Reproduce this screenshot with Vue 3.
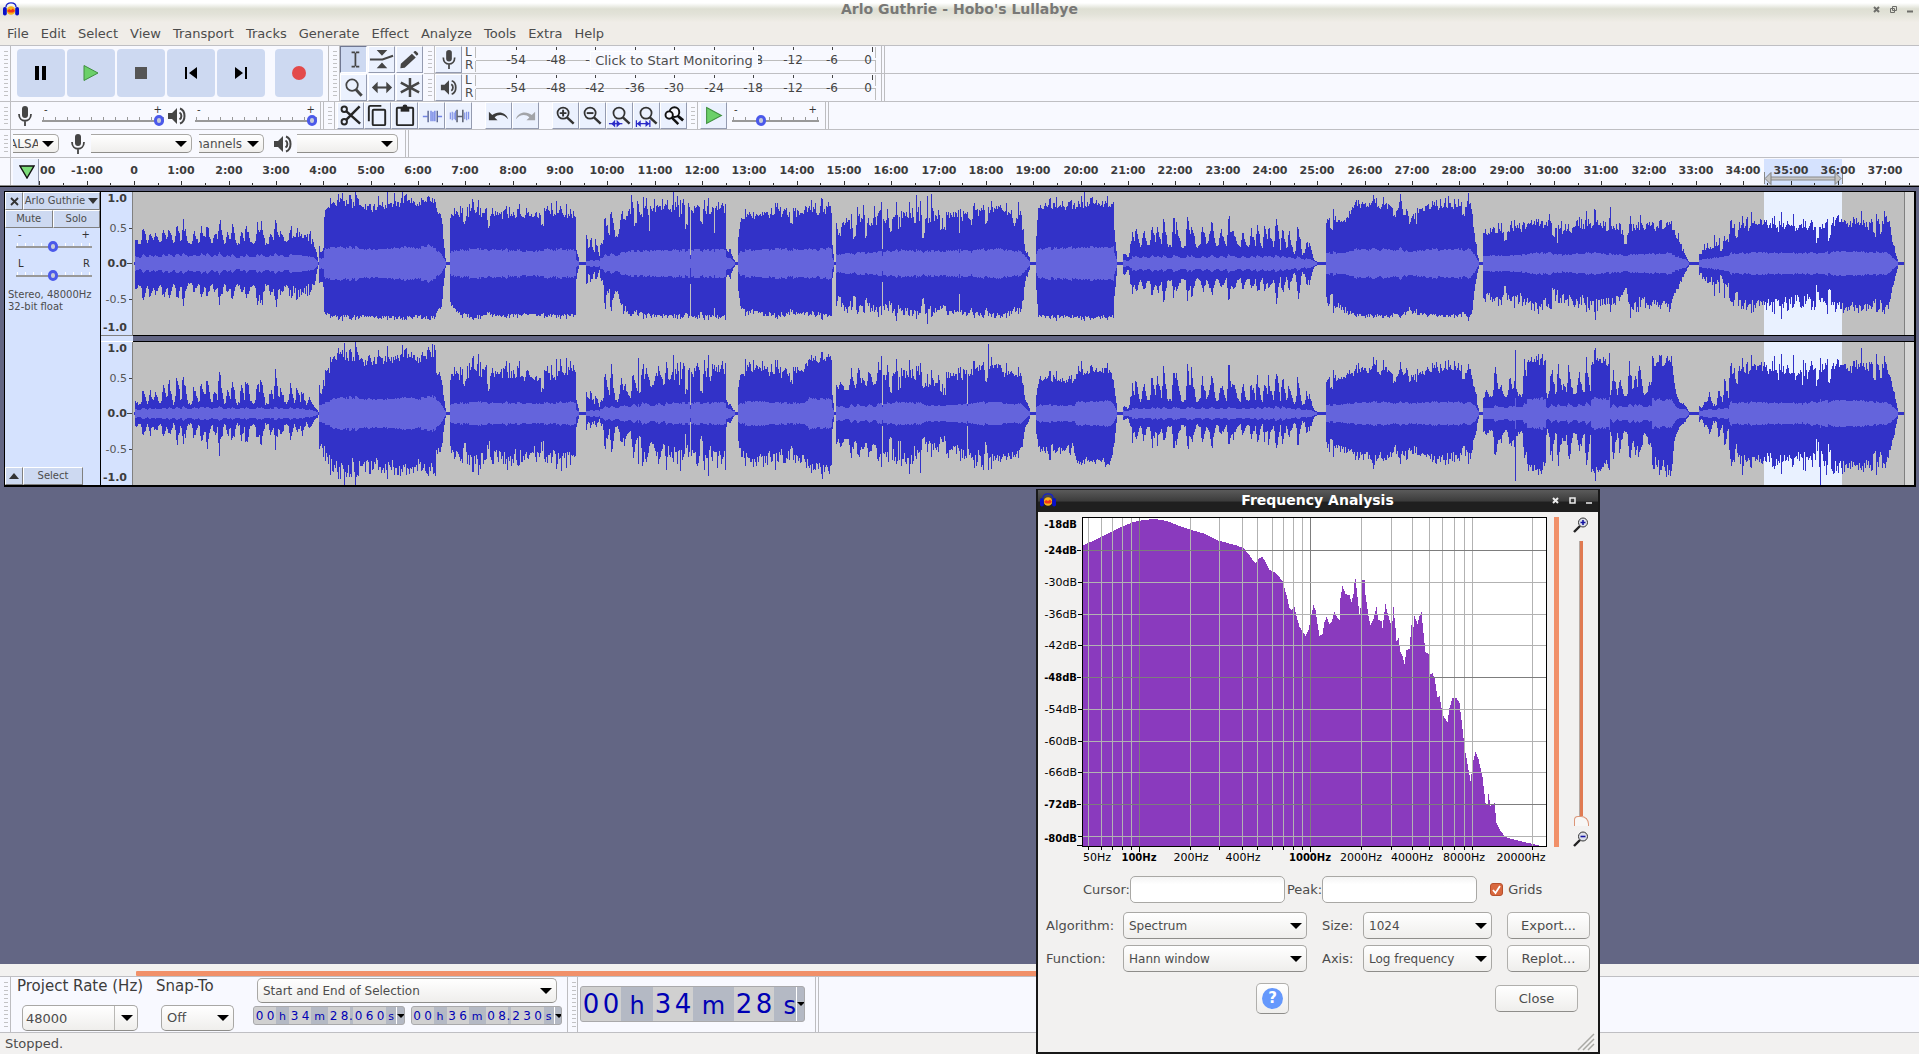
<script setup>
const menus = ['File', 'Edit', 'Select', 'View', 'Transport', 'Tracks', 'Generate', 'Effect', 'Analyze', 'Tools', 'Extra', 'Help']
const transport = ['Pause', 'Play', 'Stop', 'Skip to Start', 'Skip to End', 'Record']
const tools = [
  ['ibeam', 'Selection Tool'], ['envelope', 'Envelope Tool'], ['pencil', 'Draw Tool'],
  ['lens', 'Zoom Tool'], ['shift', 'Time Shift Tool'], ['multi', 'Multi-Tool']
]
const editButtons = [['cut', 'Cut'], ['copy', 'Copy'], ['paste', 'Paste'], ['trim', 'Trim Audio'], ['silence', 'Silence Audio']]
const undoButtons = [['undo', 'Undo'], ['redo', 'Redo']]
const zoomButtons = [['zoomin', 'Zoom In'], ['zoomout', 'Zoom Out'], ['zoomsel', 'Fit Selection'], ['zoomfit', 'Fit Project'], ['zoomtoggle', 'Zoom Toggle']]
const levels = [-54, -48, -42, -36, -30, -24, -18, -12, -6, 0]
const levelX = (i) => 41 + Math.round(i * 39.5)
/* The monitoring prompt covers the middle of the record meter's scale */
const levelText = (l, n) => (n === 1 && l > -42 && l < -18 ? '' : l)

/* Timeline: minutes to pixels, measured from the left edge of the ruler */
const minute = 47.33
const rulerX = (m) => Math.round(95 + m * minute)
const minutes = Array.from({ length: 39 }, (_, i) => i - 1)
const halves = Array.from({ length: 40 }, (_, i) => i - 1.5)

/* Loudness keyframes: x, top low, top high, bottom low, bottom high, rms */
const quiet = (x) => [x, 1, 1, 1, 1, 1]
const left = [
  quiet(0), quiet(2), [2, 17, 38, 20, 38, 7], [32, 20, 40, 20, 42, 8], [67, 18, 48, 18, 42, 9], [107, 18, 40, 20, 40, 7],
  [132, 18, 48, 20, 50, 8], [157, 20, 38, 20, 40, 8], [167, 24, 42, 22, 40, 8], [180, 18, 32, 18, 34, 6], [185, 1, 1, 1, 1, 1],
  quiet(186), [186, 14, 24, 18, 26, 5], [190, 14, 24, 18, 26, 5], [191, 48, 56, 48, 50, 14], [201, 56, 70, 50, 56, 16],
  [225, 55, 70, 51, 56, 15], [245, 46, 66, 51, 55, 13], [270, 54, 70, 51, 56, 15], [295, 58, 70, 51, 57, 17], [303, 57, 62, 49, 54, 14],
  [308, 40, 50, 40, 44, 9], [312, 4, 5, 4, 5, 2], quiet(313), quiet(317), [317, 44, 52, 38, 42, 11], [328, 44, 60, 50, 54, 13],
  [360, 44, 62, 50, 56, 14], [390, 42, 60, 49, 54, 12], [420, 46, 62, 50, 55, 14], [442, 42, 58, 49, 54, 13], [443, 12, 18, 12, 18, 3],
  quiet(446), quiet(453), [453, 4, 28, 4, 22, 2], [466, 4, 30, 4, 20, 3], [467, 16, 52, 12, 48, 6], [485, 26, 60, 28, 52, 10],
  [495, 46, 64, 48, 54, 12], [556, 46, 68, 50, 55, 13], [556, 46, 62, 50, 55, 13], [592, 46, 64, 50, 56, 13], [593, 10, 20, 10, 18, 7],
  [597, 8, 20, 8, 22, 5], quiet(602), quiet(605), [605, 22, 30, 24, 30, 8], [608, 42, 50, 44, 50, 12], [640, 44, 58, 48, 54, 14],
  [680, 46, 60, 46, 54, 13], [698, 48, 66, 50, 56, 15], [699, 10, 16, 10, 14, 4], quiet(701), quiet(703), [703, 32, 48, 36, 50, 9],
  [748, 34, 58, 38, 54, 11], [765, 42, 60, 44, 54, 13], [790, 36, 64, 40, 56, 12], [815, 40, 56, 44, 54, 12], [835, 42, 62, 46, 55, 13],
  [872, 50, 62, 48, 55, 14], [880, 34, 60, 42, 54, 12], [888, 34, 58, 42, 50, 11], [893, 12, 20, 14, 20, 6], quiet(897),
  quiet(903), [903, 24, 28, 24, 28, 8], [905, 52, 60, 50, 54, 14], [940, 52, 66, 51, 56, 15], [960, 54, 70, 52, 57, 16],
  [980, 52, 64, 50, 55, 15], [981, 26, 40, 30, 40, 10], quiet(984), quiet(990), [990, 3, 10, 3, 10, 2], [998, 6, 26, 6, 24, 4],
  [999, 16, 48, 16, 42, 7], [1050, 14, 44, 14, 34, 6], [1090, 16, 46, 14, 36, 7], [1140, 14, 50, 14, 38, 7], [1160, 8, 46, 8, 38, 6],
  [1176, 6, 30, 6, 28, 4], [1181, 3, 8, 3, 8, 2], quiet(1184), quiet(1193), [1193, 38, 48, 32, 44, 10], [1215, 40, 54, 44, 54, 11],
  [1220, 54, 64, 49, 54, 13], [1268, 52, 66, 50, 55, 14], [1271, 40, 56, 44, 52, 11], [1290, 50, 64, 49, 53, 13], [1335, 54, 67, 50, 55, 14],
  [1339, 50, 56, 46, 52, 12], [1342, 14, 22, 14, 22, 6], quiet(1346), quiet(1350), [1350, 26, 38, 28, 40, 7], [1388, 30, 44, 28, 44, 8],
  [1398, 36, 48, 36, 50, 10], [1415, 34, 46, 32, 50, 10], [1430, 26, 42, 28, 44, 8], [1460, 32, 50, 32, 50, 10], [1485, 26, 44, 28, 44, 8],
  [1500, 26, 44, 28, 48, 8], [1537, 34, 46, 34, 50, 10], [1542, 26, 36, 26, 32, 7], [1553, 4, 7, 4, 7, 3], quiet(1556),
  quiet(1566), [1566, 8, 14, 8, 14, 3], [1585, 16, 28, 16, 32, 6], [1595, 18, 28, 18, 32, 7], [1597, 32, 48, 34, 48, 10],
  [1631, 32, 46, 32, 48, 10], [1680, 30, 48, 30, 52, 10], [1710, 32, 50, 34, 50, 11], [1745, 34, 50, 40, 52, 11],
  [1756, 36, 48, 36, 48, 9], [1760, 16, 22, 18, 24, 5], quiet(1765), quiet(1771)
]
const right = [
  quiet(0), quiet(2), [2, 7, 20, 9, 20, 4], [32, 8, 40, 9, 32, 5], [67, 8, 46, 9, 42, 6], [97, 8, 36, 9, 34, 5],
  [132, 8, 46, 9, 38, 5], [157, 8, 34, 9, 28, 5], [180, 7, 16, 7, 18, 3], quiet(185), quiet(186), [186, 24, 40, 34, 44, 8],
  [196, 38, 56, 38, 56, 12], [201, 52, 66, 46, 66, 15], [225, 48, 70, 44, 70, 15], [250, 42, 62, 42, 62, 13], [280, 50, 68, 44, 66, 15],
  [302, 50, 70, 46, 68, 16], [308, 30, 36, 30, 36, 8], [312, 4, 5, 4, 5, 2], quiet(313), quiet(317), [317, 32, 44, 32, 46, 9],
  [350, 34, 58, 36, 60, 11], [380, 32, 54, 34, 58, 10], [415, 30, 52, 32, 56, 10], [442, 38, 58, 36, 60, 11], [443, 12, 16, 12, 16, 3],
  quiet(446), quiet(453), [453, 4, 22, 4, 16, 2], [466, 4, 26, 4, 16, 3], [467, 9, 48, 8, 40, 5], [495, 12, 50, 14, 48, 8],
  [515, 26, 52, 28, 54, 9], [556, 30, 54, 32, 56, 10], [592, 30, 56, 32, 58, 10], [593, 8, 14, 8, 14, 5], [597, 6, 14, 6, 14, 4], quiet(602),
  quiet(605), [605, 24, 28, 24, 28, 8], [608, 36, 46, 36, 48, 10], [622, 38, 58, 38, 58, 12], [645, 34, 48, 34, 52, 10],
  [672, 38, 52, 40, 54, 10], [676, 48, 56, 46, 62, 14], [698, 52, 62, 50, 64, 14], [699, 10, 16, 10, 14, 4], quiet(701), quiet(703),
  [703, 20, 38, 22, 40, 7], [740, 26, 52, 28, 52, 8], [765, 32, 52, 34, 56, 11], [790, 32, 52, 32, 56, 10], [793, 24, 36, 26, 38, 7],
  [825, 28, 52, 28, 50, 8], [835, 36, 54, 34, 56, 10], [860, 40, 56, 36, 58, 11], [878, 34, 48, 36, 50, 9], [888, 32, 42, 30, 42, 9],
  [893, 12, 18, 12, 18, 4], quiet(897), quiet(903), [903, 16, 20, 16, 22, 6], [906, 30, 40, 30, 42, 8], [941, 28, 38, 28, 42, 7],
  [943, 36, 52, 42, 54, 11], [977, 36, 50, 44, 54, 12], [981, 22, 30, 24, 30, 7], quiet(984), quiet(990), [990, 2, 6, 2, 6, 2],
  [998, 5, 20, 5, 18, 3], [999, 11, 46, 12, 38, 5], [1050, 10, 44, 10, 36, 5], [1100, 11, 46, 10, 36, 5], [1150, 10, 48, 10, 38, 6],
  [1176, 5, 26, 5, 24, 3], quiet(1184), quiet(1193), [1193, 28, 38, 26, 38, 8], [1225, 38, 50, 36, 50, 10], [1250, 38, 52, 38, 50, 11],
  [1275, 34, 46, 34, 46, 10], [1300, 38, 52, 38, 50, 11], [1325, 40, 54, 38, 52, 11], [1339, 36, 44, 34, 44, 10], [1342, 14, 22, 14, 22, 6],
  quiet(1346), quiet(1350), [1350, 12, 20, 14, 22, 5], [1355, 15, 42, 15, 42, 6], [1393, 16, 48, 16, 52, 8], [1394, 46, 64, 48, 64, 14],
  [1412, 46, 64, 48, 64, 15], [1413, 15, 48, 15, 52, 7], [1457, 18, 54, 18, 54, 9], [1458, 46, 60, 46, 62, 14], [1476, 46, 60, 46, 62, 14],
  [1477, 16, 42, 16, 48, 7], [1518, 18, 52, 20, 54, 8], [1519, 44, 62, 42, 64, 14], [1539, 46, 60, 46, 64, 13], [1541, 16, 36, 20, 32, 8],
  [1553, 4, 7, 4, 7, 3], quiet(1556), quiet(1566), [1566, 5, 14, 5, 16, 3], [1595, 8, 38, 8, 38, 5], [1597, 38, 56, 38, 56, 11],
  [1631, 36, 54, 36, 58, 10], [1670, 32, 56, 36, 60, 10], [1690, 40, 58, 36, 64, 12], [1711, 34, 56, 42, 62, 12], [1735, 40, 62, 44, 62, 12],
  [1752, 40, 54, 40, 56, 10], [1758, 30, 36, 30, 38, 8], quiet(1765), quiet(1771)
]
/* Short pauses inside a song and single loud hits: x, top, bottom, rms */
const accents = [
  [[557, 8, 20, 4], [749, 14, 18, 7], [581, 30, 44, 11], [516, 32, 50, 11], [826, 30, 30, 10], [912, 60, 54, 15], [951, 71, 57, 16], [783, 68, 55, 14], [838, 38, 44, 10], [1424, 20, 26, 8], [1477, 56, 48, 10], [209, 70, 57, 16], [261, 70, 56, 16]],
  [[557, 8, 8, 4], [749, 8, 12, 6], [834, 9, 12, 7], [855, 69, 56, 11], [1669, 28, 44, 8], [1382, 63, 67, 15], [1687, 55, 71, 14], [505, 55, 50, 9], [211, 70, 71, 15]]
]

const noise = (n) => {
  const v = Math.sin(n * 127.1 + 11.7) * 43758.5453
  return v - Math.floor(v)
}
/* Strummed notes: every few pixels a sharp attack with its own height that dies away */
const strum = (x) => {
  let best = 0
  for (let n = Math.floor(x / 7) - 1; n <= Math.floor(x / 7) + 1; n++) {
    const centre = n * 7 + noise(n + 40) * 5
    const height = 0.35 + 0.8 * noise(n + 900)
    const d = x - centre
    best = Math.max(best, height * (1 - (d < 0 ? -d / 2 : d / 4.5)))
  }
  return best
}

function wave(frames, hits, seed) {
  const mid = 71
  let peak = ''
  let rms = ''
  let k = 0
  for (let x = 1; x < 1771; x++) {
    while (k < frames.length - 2 && frames[k + 1][0] <= x) k++
    const a = frames[k]
    const b = frames[k + 1]
    const f = b[0] === a[0] ? 1 : Math.min(1, (x - a[0]) / (b[0] - a[0]))
    const at = (i) => a[i] + (b[i] - a[i]) * f
    const slow = noise(Math.floor(x / 3) + 5)
    const fast = noise(x + 300)
    const own = noise(x * 3 + seed)
    const sparse = at(2) > at(1) * 1.9
    const spike = fast > 0.9 ? 0.35 : 0
    let r = (slow * 0.5 + fast * 0.5) ** 1.4 + own * 0.2 - 0.08 + spike
    let s = (slow * 0.35 + noise(x * 7 + seed) * 0.65) ** 1.4 + fast * 0.2 - 0.08 + spike
    if (sparse) {
      const beat = strum(x)
      r = beat * (0.7 + 0.4 * own) + 0.12 * fast
      s = beat * (0.55 + 0.55 * noise(x * 7 + seed)) + 0.12 * fast
    } else if (slow < 0.07) {
      r -= 0.5
      s -= 0.4
    }
    let top = at(1) + (at(2) - at(1)) * r
    let low = at(3) + (at(4) - at(3)) * s
    let core = at(5) * (sparse ? 0.75 + 0.5 * strum(x) : 0.85 + 0.3 * (slow * 0.6 + fast * 0.4))
    const hit = hits.find((h) => h[0] === x)
    if (hit) [, top, low, core] = hit
    top = Math.min(71, Math.round(top))
    low = Math.min(71, Math.round(low))
    core = Math.max(0, Math.min(Math.round(core), top - 1))
    peak += `M${x}.5 ${mid - top}V${mid + 1 + low}`
    if (core) rms += `M${x}.5 ${mid - core}V${mid + 1 + core}`
  }
  return { peak, rms }
}
const channels = [wave(left, accents[0], 17), wave(right, accents[1], 91)]
const scale = [['1.0', 10, true], ['0.5', 40, false], ['0.0', 75, true], ['-0.5', 111, false], ['-1.0', 139, true]]

/* Spectrum plot */
const spectrum = [
  [0, 27], [7, 24], [20, 18], [31, 12], [40, 8], [50, 4], [60, 2], [70, 1], [79, 2], [86, 4], [96, 8], [108, 12], [122, 16], [133, 22],
  [144, 25], [152, 27], [160, 30], [165, 36], [170, 43], [172, 45], [176, 40], [179, 39], [182, 44], [186, 52], [191, 54], [194, 57],
  [199, 63], [203, 77], [206, 90], [208, 92], [211, 89], [213, 98], [216, 109], [219, 113], [222, 118], [225, 112], [228, 96],
  [230, 87], [232, 92], [234, 106], [236, 118], [239, 116], [241, 104], [243, 99], [246, 106], [248, 104], [251, 94], [254, 100],
  [256, 102], [257, 80], [259, 68], [262, 76], [266, 77], [268, 84], [270, 76], [271, 64], [272, 61], [274, 79], [276, 96], [278, 84],
  [279, 62], [281, 62], [282, 77], [285, 98], [287, 107], [290, 101], [292, 93], [293, 89], [295, 102], [298, 103], [299, 110],
  [302, 86], [304, 95], [307, 105], [309, 103], [310, 89], [312, 110], [313, 123], [315, 120], [317, 134], [319, 138], [321, 146],
  [323, 132], [326, 131], [328, 107], [330, 109], [331, 98], [334, 106], [336, 98], [338, 94], [340, 115], [342, 134], [345, 136],
  [347, 156], [349, 155], [351, 160], [354, 179], [356, 178], [359, 196], [361, 200], [364, 204], [366, 190], [369, 180], [373, 180],
  [376, 185], [378, 202], [381, 229], [384, 246], [387, 263], [390, 242], [392, 234], [395, 241], [399, 259], [402, 285], [404, 286],
  [405, 276], [407, 288], [411, 285], [413, 305], [417, 313], [422, 319], [432, 322], [445, 325], [450, 326], [458, 328]
]
const spectrumPath = (() => {
  let d = 'M0 329'
  let k = 0
  for (let x = 0; x < 459; x++) {
    while (k < spectrum.length - 2 && spectrum[k + 1][0] <= x) k++
    const [x0, y0] = spectrum[k]
    const [x1, y1] = spectrum[k + 1]
    d += `V${Math.round(y0 + ((y1 - y0) * (x - x0)) / (x1 - x0))}H${x + 1}`
  }
  return d + 'V329Z'
})()
const gridX = [6, 19, 30, 40, 49, 57, 108, 137, 160, 175, 190, 201, 211, 220, 228, 279, 309, 330, 347, 360, 372, 382, 390, 450]
const gridY = [33, 65, 97, 128, 160, 192, 224, 255, 287, 319]
const strongX = [57, 228]
const strongY = [33, 160, 287]
const dbLabels = [['-18dB', 7, true], ['-24dB', 33, true], ['-30dB', 65], ['-36dB', 97], ['-42dB', 128], ['-48dB', 160, true], ['-54dB', 192], ['-60dB', 224], ['-66dB', 255], ['-72dB', 287, true], ['-80dB', 321, true]]
const hzLabels = [['50Hz', 15], ['100Hz', 57, true], ['200Hz', 109], ['400Hz', 161], ['1000Hz', 228, true], ['2000Hz', 279], ['4000Hz', 330], ['8000Hz', 382], ['20000Hz', 439]]

const startTime = ['00', 'h', '34', 'm', '28', '.', '060', 's']
const endTime = ['00', 'h', '36', 'm', '08', '.', '230', 's']
const clock = ['00', 'h', '34', 'm', '28', 's']
const unitClass = (p) => (/\d/.test(p) ? 'digits' : p === '.' ? 'dot' : 'unit-' + p)
</script>

<template>
  <svg class="defs" width="0" height="0" aria-hidden="true">
    <symbol id="logo" viewBox="0 0 16 14">
      <path d="M3 5C3 2.600 5 .8 8 .8s5 1.800 5 4.200" fill="none" stroke="#1420c8" stroke-width="1.300" />
      <circle cx="8" cy="8.500" r="4.300" fill="#f8b418" />
      <path d="M4 9l2-2 2 1 2-1.500 2 2.500-2 1.500H6z" fill="#f0341c" />
      <rect x="0" y="5" width="3.800" height="8.500" rx="1.800" fill="#0a10c8" />
      <rect x="12.200" y="5" width="3.800" height="8.500" rx="1.800" fill="#0a10c8" />
    </symbol>
    <symbol id="mic" viewBox="0 0 16 20">
      <rect x="5" y="0" width="6" height="12" rx="3" fill="#454545" />
      <path d="M2 8c0 9 12 9 12 0M8 15v5" fill="none" stroke="#454545" stroke-width="1.800" />
    </symbol>
    <symbol id="speaker" viewBox="0 0 20 18">
      <path d="M1 6h4l5-5v16l-5-5H1z" fill="#454545" />
      <path d="M12.500 5.500c2.500 1.500 2.500 5.500 0 7M13 1.500c6 2 6 13 0 15" fill="none" stroke="#454545" stroke-width="2" />
    </symbol>
    <symbol id="ibeam" viewBox="0 0 26 26">
      <path d="M11 5.500h3.500M15.500 5.500H19M11 20.500h3.500M15.500 20.500H19M15 6v14" stroke="#454545" stroke-width="1.800" fill="none" />
    </symbol>
    <symbol id="envelope" viewBox="0 0 26 26">
      <path d="M8 3h11l-5.500 6zM8 22h11l-5.500-6z" fill="#454545" />
      <path d="M1 13h13l11-4" stroke="#454545" stroke-width="2.200" fill="none" />
    </symbol>
    <symbol id="pencil" viewBox="0 0 26 26">
      <path d="M4 17.500L15.500 7l4 4L8 21.500l-4.500.5zM17 5.500l1.500-1.300c1-.8 4.300 2.500 3.500 3.500l-1.500 1.500z" fill="#454545" />
    </symbol>
    <symbol id="lens" viewBox="0 0 26 26">
      <circle cx="11.500" cy="10.500" r="6" fill="none" stroke="#454545" stroke-width="1.800" />
      <path d="M15.500 15l6 6.500" stroke="#454545" stroke-width="3" />
    </symbol>
    <symbol id="shift" viewBox="0 0 26 26">
      <path d="M7 13h13" stroke="#454545" stroke-width="2.200" />
      <path d="M3 13l6-6v12zM24 13l-6-6v12z" fill="#454545" />
    </symbol>
    <symbol id="multi" viewBox="0 0 26 26">
      <path d="M13.500 3v20M4 8l19 10M4 18L23 8" stroke="#454545" stroke-width="2.600" />
    </symbol>
    <symbol id="cut" viewBox="0 0 26 26">
      <path d="M8.500 8.500L23 21.500M8.500 17.500L22.500 3.500" stroke="#262626" stroke-width="2.600" fill="none" />
      <circle cx="6.500" cy="6.500" r="2.800" fill="none" stroke="#262626" stroke-width="2" />
      <circle cx="6.500" cy="19.500" r="2.800" fill="none" stroke="#262626" stroke-width="2" />
    </symbol>
    <symbol id="copy" viewBox="0 0 26 26">
      <rect x="8" y="7" width="13" height="16" rx="1" fill="none" stroke="#262626" stroke-width="2" />
      <path d="M4 19V4.500C4 3.500 4.500 3 5.500 3H17" fill="none" stroke="#262626" stroke-width="2" />
    </symbol>
    <symbol id="paste" viewBox="0 0 26 26">
      <rect x="5" y="5" width="17" height="18" rx="1" fill="none" stroke="#262626" stroke-width="2" />
      <path d="M9 4h9v5H9z" fill="#262626" /><circle cx="13.500" cy="4" r="2.500" fill="#262626" />
    </symbol>
    <symbol id="trim" viewBox="0 0 26 26">
      <path d="M4 14h5M19 14h5M12.500 8v11M14.500 9v10M16.500 8v11" stroke="#7486e4" stroke-width="1.500" />
      <path d="M9.500 8v12M19 8v12" stroke="#5d6894" stroke-width="1.500" />
    </symbol>
    <symbol id="silence" viewBox="0 0 26 26">
      <path d="M4.500 10v7M6.500 9v9M8.500 10v7M10 8v10M19.500 10v7M21.500 9v9M23.500 9v8" stroke="#7d8ee6" stroke-width="1.200" />
      <path d="M11.500 7v13M17.500 7v13M12 14h5" stroke="#5b6072" stroke-width="1.600" />
    </symbol>
    <symbol id="undo" viewBox="0 0 26 26">
      <path d="M3 9v9h9l-3-3c4-4 10-3 14 2-2-8-11-9-16.500-4.500z" fill="#3a3a3a" />
    </symbol>
    <symbol id="redo" viewBox="0 0 26 26">
      <path d="M23 9v9h-9l3-3c-4-4-10-3-14 2 2-8 11-9 16.500-4.500z" fill="#a2a4a8" />
    </symbol>
    <symbol id="zoomin" viewBox="0 0 26 26">
      <circle cx="10.500" cy="10.500" r="5.800" fill="none" stroke="#333" stroke-width="1.800" />
      <path d="M10.500 7v7M7 10.500h7" stroke="#333" stroke-width="2" /><path d="M14.500 15l7 6.500" stroke="#333" stroke-width="2.600" />
    </symbol>
    <symbol id="zoomout" viewBox="0 0 26 26">
      <circle cx="10.500" cy="10.500" r="5.800" fill="none" stroke="#333" stroke-width="1.800" />
      <path d="M7 10.500h7" stroke="#333" stroke-width="2" /><path d="M14.500 15l7 6.500" stroke="#333" stroke-width="2.600" />
    </symbol>
    <symbol id="zoomsel" viewBox="0 0 26 26">
      <circle cx="12.500" cy="10.500" r="5.800" fill="none" stroke="#333" stroke-width="1.800" />
      <path d="M16.500 15l7 6.500" stroke="#333" stroke-width="2.600" />
      <path d="M2 21.500h14" stroke="#2b2bc8" stroke-width="1.300" />
      <path d="M8.500 17.500v8l-4-4zM10 17.500v8l4-4z" fill="#2b2bc8" />
    </symbol>
    <symbol id="zoomfit" viewBox="0 0 26 26">
      <circle cx="12.500" cy="10.500" r="5.800" fill="none" stroke="#333" stroke-width="1.800" />
      <path d="M16.500 15l7 6.500" stroke="#333" stroke-width="2.600" />
      <path d="M2.500 18v7M16.500 18v7M3 21.500h13" stroke="#2b2bc8" stroke-width="1.300" />
      <path d="M3 21.500l4-3.500v7zM16 21.500l-4-3.500v7z" fill="#2b2bc8" />
    </symbol>
    <symbol id="zoomtoggle" viewBox="0 0 26 26">
      <circle cx="14" cy="9.500" r="5" fill="#f8f9ff" stroke="#111" stroke-width="2" />
      <path d="M17 13l6 5" stroke="#111" stroke-width="3" />
      <circle cx="8.500" cy="12.500" r="3.800" fill="#f8f9ff" stroke="#111" stroke-width="2" />
      <path d="M11 15l7 7" stroke="#111" stroke-width="2.600" />
    </symbol>
    <symbol id="playgreen" viewBox="0 0 16 18">
      <path d="M1 1.500L15 9 1 16.500z" fill="#6bd069" stroke="#3f8f3f" stroke-width="1" />
    </symbol>
  </svg>

  <div class="app">
    <header class="titlebar">
      <svg class="logo"><use href="#logo" /></svg>
      <h1>Arlo Guthrie - Hobo's Lullabye</h1>
      <div class="winctl">
        <button aria-label="Close"><svg viewBox="0 0 7 7"><path d="M1 1l5 5M6 1L1 6" stroke="#6e6e6a" stroke-width="2" /></svg></button>
        <button aria-label="Restore"><svg viewBox="0 0 7 7"><path d="M2.500.5h4v4h-4zM.5 2.500h4v4h-4z" fill="none" stroke="#6e6e6a" /></svg></button>
        <button aria-label="Minimize"><svg viewBox="0 0 7 7"><path d="M0 5.500h6" stroke="#6e6e6a" stroke-width="2" /></svg></button>
      </div>
    </header>
    <nav class="menubar">
      <button v-for="m in menus" :key="m">{{ m }}</button>
    </nav>

    <section class="dock-top">
      <div class="bar transport">
        <i class="grip"></i>
        <button v-for="t in transport" :key="t" class="big" :class="{ record: t === 'Record' }" :aria-label="t">
          <svg v-if="t === 'Pause'" viewBox="0 0 16 16"><path d="M2 1h4v14H2zM9 1h4v14H9z" /></svg>
          <svg v-else-if="t === 'Play'"><use href="#playgreen" /></svg>
          <svg v-else-if="t === 'Stop'" viewBox="0 0 16 16"><path d="M2 2h12v12H2z" fill="#555" /></svg>
          <svg v-else-if="t === 'Skip to Start'" viewBox="0 0 16 16"><path d="M2 2h2v12H2zM14 2v12L6 8z" /></svg>
          <svg v-else-if="t === 'Skip to End'" viewBox="0 0 16 16"><path d="M12 2h2v12h-2zM2 2v12l8-6z" /></svg>
          <svg v-else viewBox="0 0 16 16"><circle cx="8" cy="8" r="7" fill="#e34a4a" /></svg>
        </button>
      </div>
      <div class="bar">
        <i class="grip"></i>
        <div class="tools">
          <button v-for="(t, i) in tools" :key="t[0]" class="tb" :class="{ on: i === 0 }" :aria-label="t[1]"><svg><use :href="'#' + t[0]" /></svg></button>
        </div>
      </div>
      <div class="meters">
        <div v-for="n in 2" :key="n" class="bar meter">
          <i class="grip"></i>
          <button class="tb" :aria-label="n === 1 ? 'Record Meter' : 'Playback Meter'">
            <svg class="small"><use :href="n === 1 ? '#mic' : '#speaker'" /></svg>
          </button>
          <div class="lr"><span>L</span><span>R</span></div>
          <div class="scale">
            <svg width="402" height="27">
              <path d="M.5 1v11M.5 15v11M400.500 1v11M400.500 15v11" stroke="#bdbdbd" />
              <path d="M1 14.500h400" stroke="#bdbdbd" />
              <path v-for="(l, i) in levels" :key="l" :d="`M${levelX(i)}.5 1v${l ? 3 : 5}`" stroke="#444" />
              <text v-for="(l, i) in levels" :key="'t' + l" :x="l ? levelX(i) : 397" y="18" :text-anchor="l ? 'middle' : 'end'">{{ levelText(l, n) }}</text>
            </svg>
            <span v-if="n === 1" class="monitor">Click to Start Monitoring</span>
          </div>
          <i class="end"></i>
        </div>
      </div>
    </section>

    <section class="dock-row">
      <i class="grip"></i>
      <svg class="mic"><use href="#mic" /></svg>
      <label class="slider vol"><span>-</span><span>+</span><input type="range" value="100" aria-label="Recording Volume" /></label>
      <svg class="spk"><use href="#speaker" /></svg>
      <label class="slider vol"><span>-</span><span>+</span><input type="range" value="100" aria-label="Playback Volume" /></label>
      <i class="end"></i>
      <i class="grip"></i>
      <div class="group">
        <button v-for="b in editButtons" :key="b[0]" class="tb" :aria-label="b[1]"><svg><use :href="'#' + b[0]" /></svg></button>
      </div>
      <div class="group spaced">
        <button v-for="b in undoButtons" :key="b[0]" class="tb" :aria-label="b[1]"><svg><use :href="'#' + b[0]" /></svg></button>
      </div>
      <div class="group spaced">
        <button v-for="b in zoomButtons" :key="b[0]" class="tb" :aria-label="b[1]"><svg><use :href="'#' + b[0]" /></svg></button>
      </div>
      <i class="grip"></i>
      <button class="tb" aria-label="Play at Speed"><svg class="small"><use href="#playgreen" /></svg></button>
      <label class="slider speed"><span>-</span><span>+</span><input type="range" value="31" aria-label="Playback Speed" /></label>
      <i class="end"></i>
    </section>

    <section class="dock-row devices">
      <i class="grip"></i>
      <div class="combo host"><select aria-label="Audio Host"><option>ALSA</option></select></div>
      <svg class="mic"><use href="#mic" /></svg>
      <div class="combo dev"><select aria-label="Recording Device"><option></option></select></div>
      <div class="combo chan"><select aria-label="Recording Channels"><option>2 (Stereo) Recording Channels</option></select></div>
      <svg class="spk"><use href="#speaker" /></svg>
      <div class="combo dev"><select aria-label="Playback Device"><option></option></select></div>
      <i class="end"></i>
    </section>

    <section class="timeline">
      <i class="pinbox"></i>
      <button class="pin" aria-label="Pinned Play Head"><svg viewBox="0 0 16 14"><path d="M1 1h14L8 13z" fill="#7bdc79" stroke="#111" stroke-width="1.400" /></svg></button>
      <svg class="ruler" height="28">
        <rect x="1725" y="1" width="78" height="27" fill="#d5e2fe" />
        <path d="M1725.500 14v12M1803.500 14v12" stroke="#888" />
        <path d="M1731 20.500h66" stroke="#8a8a8a" stroke-width="4" />
        <path d="M1731 20.500h66" stroke="#c6c6c6" stroke-width="2" />
        <path d="M1726 20.500l6-6v12zM1802 20.500l-6-6v12z" fill="#c4c4c4" stroke="#808080" />
        <path v-for="m in minutes" :key="m" :d="`M${rulerX(m)}.5 23v5`" stroke="#333" />
        <path v-for="m in halves" :key="m" :d="`M${rulerX(m)}.5 25v3`" stroke="#333" />
        <path d="M.5 23v5" stroke="#333" />
        <text x="1" y="16" text-anchor="start">00</text>
        <text v-for="m in minutes" :key="'t' + m" :x="rulerX(m)" y="16" text-anchor="middle">{{ m ? m + ':00' : '0' }}</text>
      </svg>
    </section>

    <main class="workspace">
      <article class="track">
        <div class="tcp">
          <div class="tcp-row">
            <button class="tcp-btn x" aria-label="Close Track"><svg viewBox="0 0 9 9"><path d="M1 1l7 7M8 1L1 8" stroke="#333" stroke-width="1.800" /></svg></button>
            <button class="tcp-btn name">Arlo Guthrie<b class="tri"></b></button>
          </div>
          <div class="tcp-row"><button class="tcp-btn">Mute</button><button class="tcp-btn">Solo</button></div>
          <div class="knobs">
            <label class="slider gain"><span>-</span><span>+</span><input type="range" value="49" aria-label="Gain" /></label>
            <label class="slider gain"><span>L</span><span>R</span><input type="range" value="49" aria-label="Pan" /></label>
          </div>
          <p class="info">Stereo, 48000Hz<br />32-bit float</p>
          <div class="tcp-row foot">
            <button class="tcp-btn x" aria-label="Collapse"><b class="tri up"></b></button>
            <button class="tcp-btn sel">Select</button>
          </div>
        </div>
        <div class="channels">
          <div v-for="(c, i) in channels" :key="i" class="channel">
            <svg class="vruler" width="32" height="143">
              <text v-for="s in scale" :key="s[0]" x="26" :y="s[1]" text-anchor="end" :class="{ strong: s[2] }">{{ s[0] }}</text>
              <path d="M28 36.500h3M26 71.500h5M28 107.500h3" stroke="#444" />
            </svg>
            <svg class="wave" height="143" shape-rendering="crispEdges">
              <rect x="1631" y="0" width="78" height="143" fill="#e9f1ff" />
              <rect x="1771" y="0" width="1" height="143" fill="#808080" />
              <rect x="1772" y="0" width="2000" height="143" fill="#d6d6d6" />
              <path :d="c.peak" stroke="#3232c8" />
              <path :d="c.rms" stroke="#6464dc" />
            </svg>
          </div>
        </div>
      </article>
    </main>

    <div class="hscroll"><i></i></div>

    <section class="dock-bottom">
      <i class="grip"></i>
      <div class="field rate">
        <label for="rate">Project Rate (Hz)</label>
        <div class="combo edit"><input id="rate" type="text" value="48000" /></div>
      </div>
      <div class="field snap">
        <label for="snap">Snap-To</label>
        <div class="combo"><select id="snap"><option>Off</option></select></div>
      </div>
      <div class="selection">
        <div class="combo"><select aria-label="Selection mode"><option>Start and End of Selection</option></select></div>
        <div class="times">
          <div v-for="(t, i) in [startTime, endTime]" :key="i" class="time">
            <span v-for="(p, j) in t" :key="j" :class="unitClass(p)"><em v-for="(ch, q) in p" :key="q">{{ ch }}</em></span>
            <button aria-label="Time format"><b class="tri"></b></button>
          </div>
        </div>
      </div>
      <i class="grip"></i>
      <div class="time clock">
        <span v-for="(p, j) in clock" :key="j" :class="unitClass(p)"><em v-for="(ch, q) in p" :key="q">{{ ch }}</em></span>
        <button aria-label="Time format"><b class="tri"></b></button>
      </div>
      <i class="end"></i>
    </section>
    <footer class="status">Stopped.</footer>

    <section class="dialog" role="dialog" aria-label="Frequency Analysis">
      <header>
        <svg class="logo"><use href="#logo" /></svg>
        <h2>Frequency Analysis</h2>
        <div class="winctl">
          <button aria-label="Close"><svg viewBox="0 0 7 7"><path d="M1 1l5 5M6 1L1 6" stroke="#eee" stroke-width="2" /></svg></button>
          <button aria-label="Maximize"><svg viewBox="0 0 7 7"><path d="M1 1h5v5H1z" fill="none" stroke="#eee" stroke-width="1.500" /></svg></button>
          <button aria-label="Minimize"><svg viewBox="0 0 7 7"><path d="M0 6h6" stroke="#eee" stroke-width="1.500" /></svg></button>
        </div>
      </header>
      <div class="plot">
        <svg class="graph" width="512" height="352">
          <g transform="translate(44 5)">
            <rect x=".5" y=".5" width="464" height="329" fill="#fff" />
            <path :d="spectrumPath" transform="translate(1 1)" fill="#8a3abe" />
            <g shape-rendering="crispEdges">
              <path v-for="x in gridX" :key="'x' + x" :d="`M${x}.5 1v328`" :stroke="strongX.includes(x) ? '#7d7d7d' : '#b2b2b2'" />
              <path v-for="y in gridY" :key="'y' + y" :d="`M1 ${y}.5h463`" :stroke="strongY.includes(y) ? '#7d7d7d' : '#b2b2b2'" />
              <path v-for="x in gridX" :key="'tx' + x" :d="`M${x}.5 330v${strongX.includes(x) ? 5 : 3}`" stroke="#000" />
              <path v-for="y in gridY" :key="'ty' + y" :d="`M${strongY.includes(y) ? -5 : -4} ${y}.5h4`" stroke="#000" />
              <path d="M-5 328.500h5" stroke="#000" />
            </g>
            <rect x=".5" y=".5" width="464" height="329" fill="none" stroke="#000" />
            <text v-for="l in dbLabels" :key="l[0]" x="-5" :y="l[1] + 4" text-anchor="end" :class="{ strong: l[2] }">{{ l[0] }}</text>
            <text v-for="l in hzLabels" :key="l[0]" :x="l[1]" y="344" text-anchor="middle" :class="{ strong: l[2] }">{{ l[0] }}</text>
          </g>
        </svg>
        <i class="vbar"></i>
        <div class="vzoom">
          <svg viewBox="0 0 16 16"><path d="M1 15l6-6" stroke="#222" stroke-width="2.400" /><circle cx="10" cy="5.500" r="4.500" fill="#dde0ea" stroke="#333" /><path d="M10 3v5M7.500 5.500h5" stroke="#1414a0" stroke-width="1.600" /></svg>
          <input type="range" value="0" aria-label="Vertical zoom" />
          <svg viewBox="0 0 16 16"><path d="M1 15l6-6" stroke="#222" stroke-width="2.400" /><circle cx="10" cy="5.500" r="4.500" fill="#dde0ea" stroke="#333" /><path d="M7.500 5.500h5" stroke="#1414a0" stroke-width="1.600" /></svg>
        </div>
      </div>
      <div class="readout">
        <label for="cursor">Cursor:</label><input id="cursor" type="text" />
        <label for="peak">Peak:</label><input id="peak" type="text" />
        <label class="check"><input type="checkbox" checked />Grids</label>
      </div>
      <div class="options">
        <label for="algo">Algorithm:</label>
        <div class="combo"><select id="algo"><option>Spectrum</option></select></div>
        <label for="size">Size:</label>
        <div class="combo"><select id="size"><option>1024</option></select></div>
        <button class="push">Export...</button>
        <label for="func">Function:</label>
        <div class="combo"><select id="func"><option>Hann window</option></select></div>
        <label for="axis">Axis:</label>
        <div class="combo"><select id="axis"><option>Log frequency</option></select></div>
        <button class="push">Replot...</button>
      </div>
      <div class="actions">
        <button class="push help" aria-label="Help"><span>?</span></button>
        <button class="push">Close</button>
      </div>
      <svg class="resize" viewBox="0 0 18 18"><path d="M1 17L17 1M6 17L17 6M11 17l6-6" stroke="#a9a9a4" stroke-width="1.500" /></svg>
    </section>
  </div>
</template>

<style>
body { background: #f2f1f0; }
</style>

<style scoped>
* { box-sizing: border-box; }
button, input, select { font: inherit; color: inherit; margin: 0; padding: 0; border: 0; background: none; border-radius: 0; }
i, em { font-style: normal; }
.defs { position: absolute; }
.app { position: relative; display: flex; flex-direction: column; min-height: 100vh; overflow: hidden; font-family: "DejaVu Sans", sans-serif; font-size: 13px; color: #4c4c4c; }
.app > * { flex: none; }

.titlebar { height: 22px; display: flex; align-items: center; padding: 0 5px 4px 3px; background: linear-gradient(#fff 0 3px, #dedfd3 9px, #e2e2d8 14px, #f0ede7 22px); }
.titlebar h1 { flex: 1; margin: 0 0 0 27px; text-align: center; font-size: 14px; line-height: 18px; color: #787876; }
.logo { width: 16px; height: 14px; }
.winctl { display: flex; gap: 10px; }
.winctl button { width: 7px; height: 7px; display: block; }
.winctl svg { display: block; width: 7px; height: 7px; }
.menubar { height: 23px; background: #f0ede8; display: flex; gap: 12px; padding-left: 7px; }
.menubar button { height: 23px; line-height: 23px; color: #4c4c4c; }

.dock-top { display: flex; height: 56px; background: #f8f9ff; }
.bar { display: flex; border-top: 1px solid #bfbfc3; }
.grip { flex: none; width: 11px; align-self: stretch; border-right: 1px solid #bdbdc0; background: repeating-linear-gradient(#c2c2c4 0 1px, transparent 1px 4px) 4px 5px / 4px calc(100% - 9px) no-repeat; }
.end { flex: none; width: 4px; align-self: stretch; border: 1px solid #bdbdc0; border-width: 0 1px; }
.transport { width: 329px; gap: 2px; align-items: flex-start; border-right: 1px solid #bdbdc0; }
.transport .grip { margin-right: 4px; }
.big { width: 48px; height: 48px; margin-top: 3px; border-radius: 4px; background: #cdd9f1; display: grid; place-items: center; }
.big svg { width: 16px; height: 18px; }
.record { margin-left: 8px; }
.tools { display: grid; grid-template-columns: repeat(3, 28px); grid-auto-rows: 28px; }
.tb { flex: none; width: 27px; height: 27px; background: #ebf1fe; border: 1px solid; border-color: #fff #949bb0 #949bb0 #fff; display: grid; place-items: center; }
.tb svg { width: 25px; height: 25px; }
.tb svg.small { width: 18px; height: 19px; }
.tb.on { background: #cdd9f1; border-color: #707892 #fff #fff #707892; }
.meters { flex: 1; display: flex; flex-direction: column; }
.meter { height: 28px; }
.meter .tb { margin-left: 0; }
.lr { width: 13px; padding-left: 3px; display: flex; flex-direction: column; font-size: 12px; line-height: 13px; }
.scale { position: relative; width: 406px; }
.scale svg, .wave, .vruler, .ruler, .graph { display: block; }
.scale text { font-size: 12px; fill: #444; }
.monitor { position: absolute; left: 115px; top: 5px; width: 168px; height: 18px; line-height: 18px; text-align: center; background: #f8f9ff; border: 1px solid #fff; white-space: nowrap; }

.dock-row { display: flex; align-items: center; height: 28px; border-top: 1px solid #bfbfc3; background: #f8f9ff; }
.mic { width: 16px; height: 20px; margin: 0 6px; }
.spk { width: 20px; height: 18px; margin: 0 5px; }
.slider { display: grid; grid-template-columns: 1fr 1fr; height: 22px; font-size: 10px; line-height: 9px; color: #333; }
.slider span:nth-child(2) { text-align: right; }
.slider input { grid-column: 1 / 3; }
.slider span { padding: 0 2px; }
.vol { width: 122px; margin: 0 0 0 3px; }
.vol + .spk { margin-left: 3px; }
.slider input { appearance: none; width: 100%; height: 12px; background: linear-gradient(#999, #999) 0 6px / 100% 2px no-repeat, repeating-linear-gradient(90deg, #999 0 1px, transparent 1px 12px) 1px 3px / 100% 3px no-repeat; }
.slider input::-webkit-slider-runnable-track { height: 12px; }
.slider input::-webkit-slider-thumb { appearance: none; width: 10px; height: 11px; margin-top: 1px; border-radius: 5px; border: 3px solid #4b59ea; background: #c8ccd8; }
.dock-row > .grip { margin-right: 2px; }
.dock-row > .grip:first-child { margin-right: 0; }
.vol + .end { margin-left: 3px; }
.group { display: flex; }
.group.spaced { margin-left: 13px; }
.speed { width: 87px; margin: 0 6px 0 5px; }

.combo { position: relative; height: 26px; display: flex; justify-content: flex-end; overflow: hidden; }
.combo select, .combo input { appearance: none; flex: 1; height: 100%; padding: 0 26px 0 5px; border: 1px solid #a9a8a5; border-bottom-color: #8e8d8a; border-radius: 5px; background: linear-gradient(#fff, #efeeec); color: #4c4c4c; font-size: 12px; }
.combo::after { content: ""; position: absolute; right: 5px; top: 50%; margin-top: -3px; border: 6px solid transparent; border-top: 6px solid #000; border-bottom: 0; }
.devices .combo { height: 19px; }
.devices select { padding: 0 20px 0 5px; }
.host { width: 46px; margin-left: 2px; }
.host select { flex: none; width: 56px; }
.devices .mic { margin: 0 5px 0 11px; }
.dev { width: 101px; }
.dev select { border-left: 0; border-radius: 0 5px 5px 0; }
.chan { width: 65px; margin-left: 7px; }
.chan select { flex: none; }
.devices .spk { margin: 0 4px 0 9px; }
.devices .end { margin-left: 7px; }

.timeline { display: flex; height: 29px; border-top: 1px solid #bfbfc3; border-bottom: 1px solid #8c8c8c; background: #f8f9ff; overflow: hidden; }
.pinbox { width: 11px; border-right: 1px solid #bdbdc0; flex: none; }
.pin { flex: none; width: 26px; margin: 1px 0 0 2px; padding-left: 2px; background: #ebf1fe; border-right: 1px solid #949bb0; display: grid; place-items: center; }
.pin svg { width: 16px; height: 14px; }
.ruler { flex: 1; width: 0; }
.ruler text { font-size: 11px; font-weight: bold; fill: #3c3c3c; }

.workspace { flex: 1 0 auto; border-top: 1px solid #000; background: #636684; padding: 4px 3px 20px 4px; }
.track { display: flex; background: #d5e2fe; border: 1px solid #000; border-width: 1px 2px 2px 1px; }
.tcp { flex: none; width: 96px; border-right: 1px solid #000; display: flex; flex-direction: column; font-size: 10px; }
.tcp-row { display: flex; height: 18px; }
.tcp-btn { flex: 1; background: #cdd9f1; border: 1px solid; border-color: #fff #808080 #808080 #fff; display: flex; align-items: center; justify-content: center; line-height: 14px; white-space: nowrap; }
.tcp-btn.x { flex: none; width: 18px; }
.tcp-btn.x svg { width: 9px; height: 9px; }
.name { gap: 3px; }
.tri { border: 5px solid transparent; border-top: 6px solid #333; border-bottom: 0; }
.tri.up { border-top: 0; border-bottom: 6px solid #333; }
.knobs { display: flex; flex-direction: column; gap: 7px; margin: 2px 0 0 11px; }
.gain { width: 76px; }
.gain input { background: linear-gradient(#999, #999) 0 6px / 100% 2px no-repeat, repeating-linear-gradient(90deg, #fff 0 1px, transparent 1px 8px) 1px 3px / 100% 3px no-repeat; }
.info { margin: 8px 0 0 3px; line-height: 12px; white-space: nowrap; }
.foot { margin-top: auto; }
.sel { flex: none; width: 60px; }
.channels { flex: 1; min-width: 0; display: flex; flex-direction: column; }
.channel { display: flex; }
.channel + .channel { padding-top: 7px; background: linear-gradient(#808080 0 1px, #d5e2fe 1px 6px, #fff 6px) 0 0 / 32px 7px no-repeat, linear-gradient(#000 0 1px, #636684 1px 6px, #000 6px) 0 0 / 100% 7px no-repeat; }
.vruler { flex: none; border-right: 1px solid #808080; background: #d5e2fe; }
.vruler text { font-size: 11px; fill: #555; }
.vruler .strong { font-weight: bold; fill: #3c3c3c; }
.wave { flex: 1; width: 0; background: #c0c0c0; fill: none; }

.hscroll { height: 12px; background: #f2f1f0; padding: 7px 0 0 136px; }
.hscroll i { display: block; width: 70%; height: 5px; border-radius: 1px; background: #f19069; }
.dock-bottom { display: flex; height: 57px; border: 1px solid #bfbfc3; border-width: 1px 0; background: #f8f9ff; }
.field { display: flex; flex-direction: column; gap: 10px; font-size: 15px; line-height: 18px; }
.field .combo { margin-left: 5px; height: 26px; }
.field label { color: #3c3c3c; }
.rate { width: 121px; margin: 0 18px 0 6px; white-space: nowrap; }
.field select, .field input { font-size: 13px; }
.combo.edit input { width: 100%; padding-left: 3px; }
.combo.edit::before { content: ""; position: absolute; right: 23px; top: 1px; bottom: 1px; width: 1px; background: #b9b8b5; }
.snap { width: 78px; }
.selection { margin: 1px 5px 0 19px; width: 309px; }
.selection .combo { margin: 0 5px 0 4px; height: 25px; }
.times { display: flex; gap: 6px; margin-top: 3px; }
.time { display: flex; height: 19px; background: #b4b9c4; border: 1px solid #a9a9ab; border-radius: 3px; color: #0000b4; font-size: 12px; line-height: 19px; overflow: hidden; }
.time span { display: flex; }
.time em { width: 11px; text-align: center; }
.digits { background: #d0d0d0; }
.dot em { width: 3px; text-indent: -1px; }
.unit-h em { width: 13px; }
.unit-m em { width: 17px; }
.unit-s em { width: 10px; }
.unit-h, .unit-m, .unit-s { font-size: 11px; }
.time button { flex: none; width: 8px; border-left: 1px solid #fff; display: grid; place-items: center; }
.time .tri { border-width: 4px 4px 0; border-top-color: #000; }
.clock { height: 36px; margin: 9px 10px 0 2px; font-size: 26px; line-height: 34px; }
.clock em { width: 20px; }
.clock .unit-h em { width: 32px; }
.clock .unit-m em { width: 41px; }
.clock .unit-s em { width: 22px; text-align: right; }
.clock .unit-h, .clock .unit-m, .clock .unit-s { font-size: 24px; line-height: 38px; }
.selection + .grip { border-left: 1px solid #bdbdc0; }
.status { height: 21px; padding-left: 5px; line-height: 22px; background: #f2f1f0; }

.dialog { position: absolute; left: 1036px; top: 489px; width: 564px; height: 565px; border: 2px solid #181818; border-top-width: 1px; background: #f2f1f0; display: flex; flex-direction: column; }
.dialog header { height: 22px; padding: 0 5px 2px 2px; display: flex; align-items: center; background: linear-gradient(#5a5a5a, #3c3c3c 50%, #1f1f1f 55%); color: #fff; }
.dialog h2 { flex: 1; margin: 0 0 0 27px; text-align: center; font-size: 14px; line-height: 18px; }
.plot { display: flex; }
.graph text { font-size: 11px; fill: #000; }
.graph .strong { font-size: 10px; font-weight: bold; }
.graph { flex: none; overflow: visible; }
.vbar { width: 5px; height: 330px; margin: 5px 0 0 4px; background: #f19069; }
.vzoom { margin: 5px 0 0 14px; width: 16px; display: flex; flex-direction: column; align-items: center; gap: 5px; }
.vzoom svg { width: 16px; height: 16px; }
.vzoom input { appearance: none; writing-mode: vertical-lr; direction: rtl; width: 16px; height: 288px; background: linear-gradient(90deg, #b5aaa4 1px, #e07a52 1px) 6px 3px / 4px 275px no-repeat; }
.vzoom input::-webkit-slider-thumb { appearance: none; width: 15px; height: 10px; border: 1px solid #dc9577; border-bottom: 0; border-radius: 4px 8px 0 0; background: #f8f7f6; }
.readout { display: flex; align-items: center; margin: 12px 0 0 45px; }
.readout input[type="text"] { width: 155px; height: 27px; margin: 0 2px 0 0; border: 1px solid #a9a8a5; border-radius: 5px; background: linear-gradient(#f4f4f4, #fff 30%); }
.readout label { white-space: nowrap; }
.check { display: flex; align-items: center; gap: 5px; margin-left: 11px; }
.check input { appearance: none; width: 13px; height: 13px; border-radius: 3px; border: 1px solid #b6502c; background: #d9683e url("data:image/svg+xml,%3Csvg xmlns='http://www.w3.org/2000/svg' viewBox='0 0 11 11'%3E%3Cpath d='M2 6l2.500 3L9 2' fill='none' stroke='%23fff' stroke-width='1.800'/%3E%3C/svg%3E"); }
.options { display: grid; grid-template-columns: 77px 184px 56px 129px 83px; row-gap: 6px; margin: 9px 0 0 8px; align-items: center; }
.options .combo { height: 27px; }
.options label:nth-of-type(even) { padding-left: 15px; }
.options .push { margin-left: 15px; }
.options .combo select { width: 100%; }
.push { width: 83px; height: 27px; border: 1px solid #b0afac; border-bottom-color: #8e8d8a; border-radius: 5px; background: linear-gradient(#fff, #efeeec); }
.actions { display: flex; align-items: center; justify-content: space-between; margin: 11px 20px 0 218px; }
.help { width: 33px; height: 31px; display: grid; place-items: center; }
.help span { width: 21px; height: 21px; border-radius: 50%; background: #6598fc; color: #fff; font-size: 15px; font-weight: bold; line-height: 21px; }
.resize { position: absolute; right: 3px; bottom: 1px; width: 18px; height: 18px; }
</style>
